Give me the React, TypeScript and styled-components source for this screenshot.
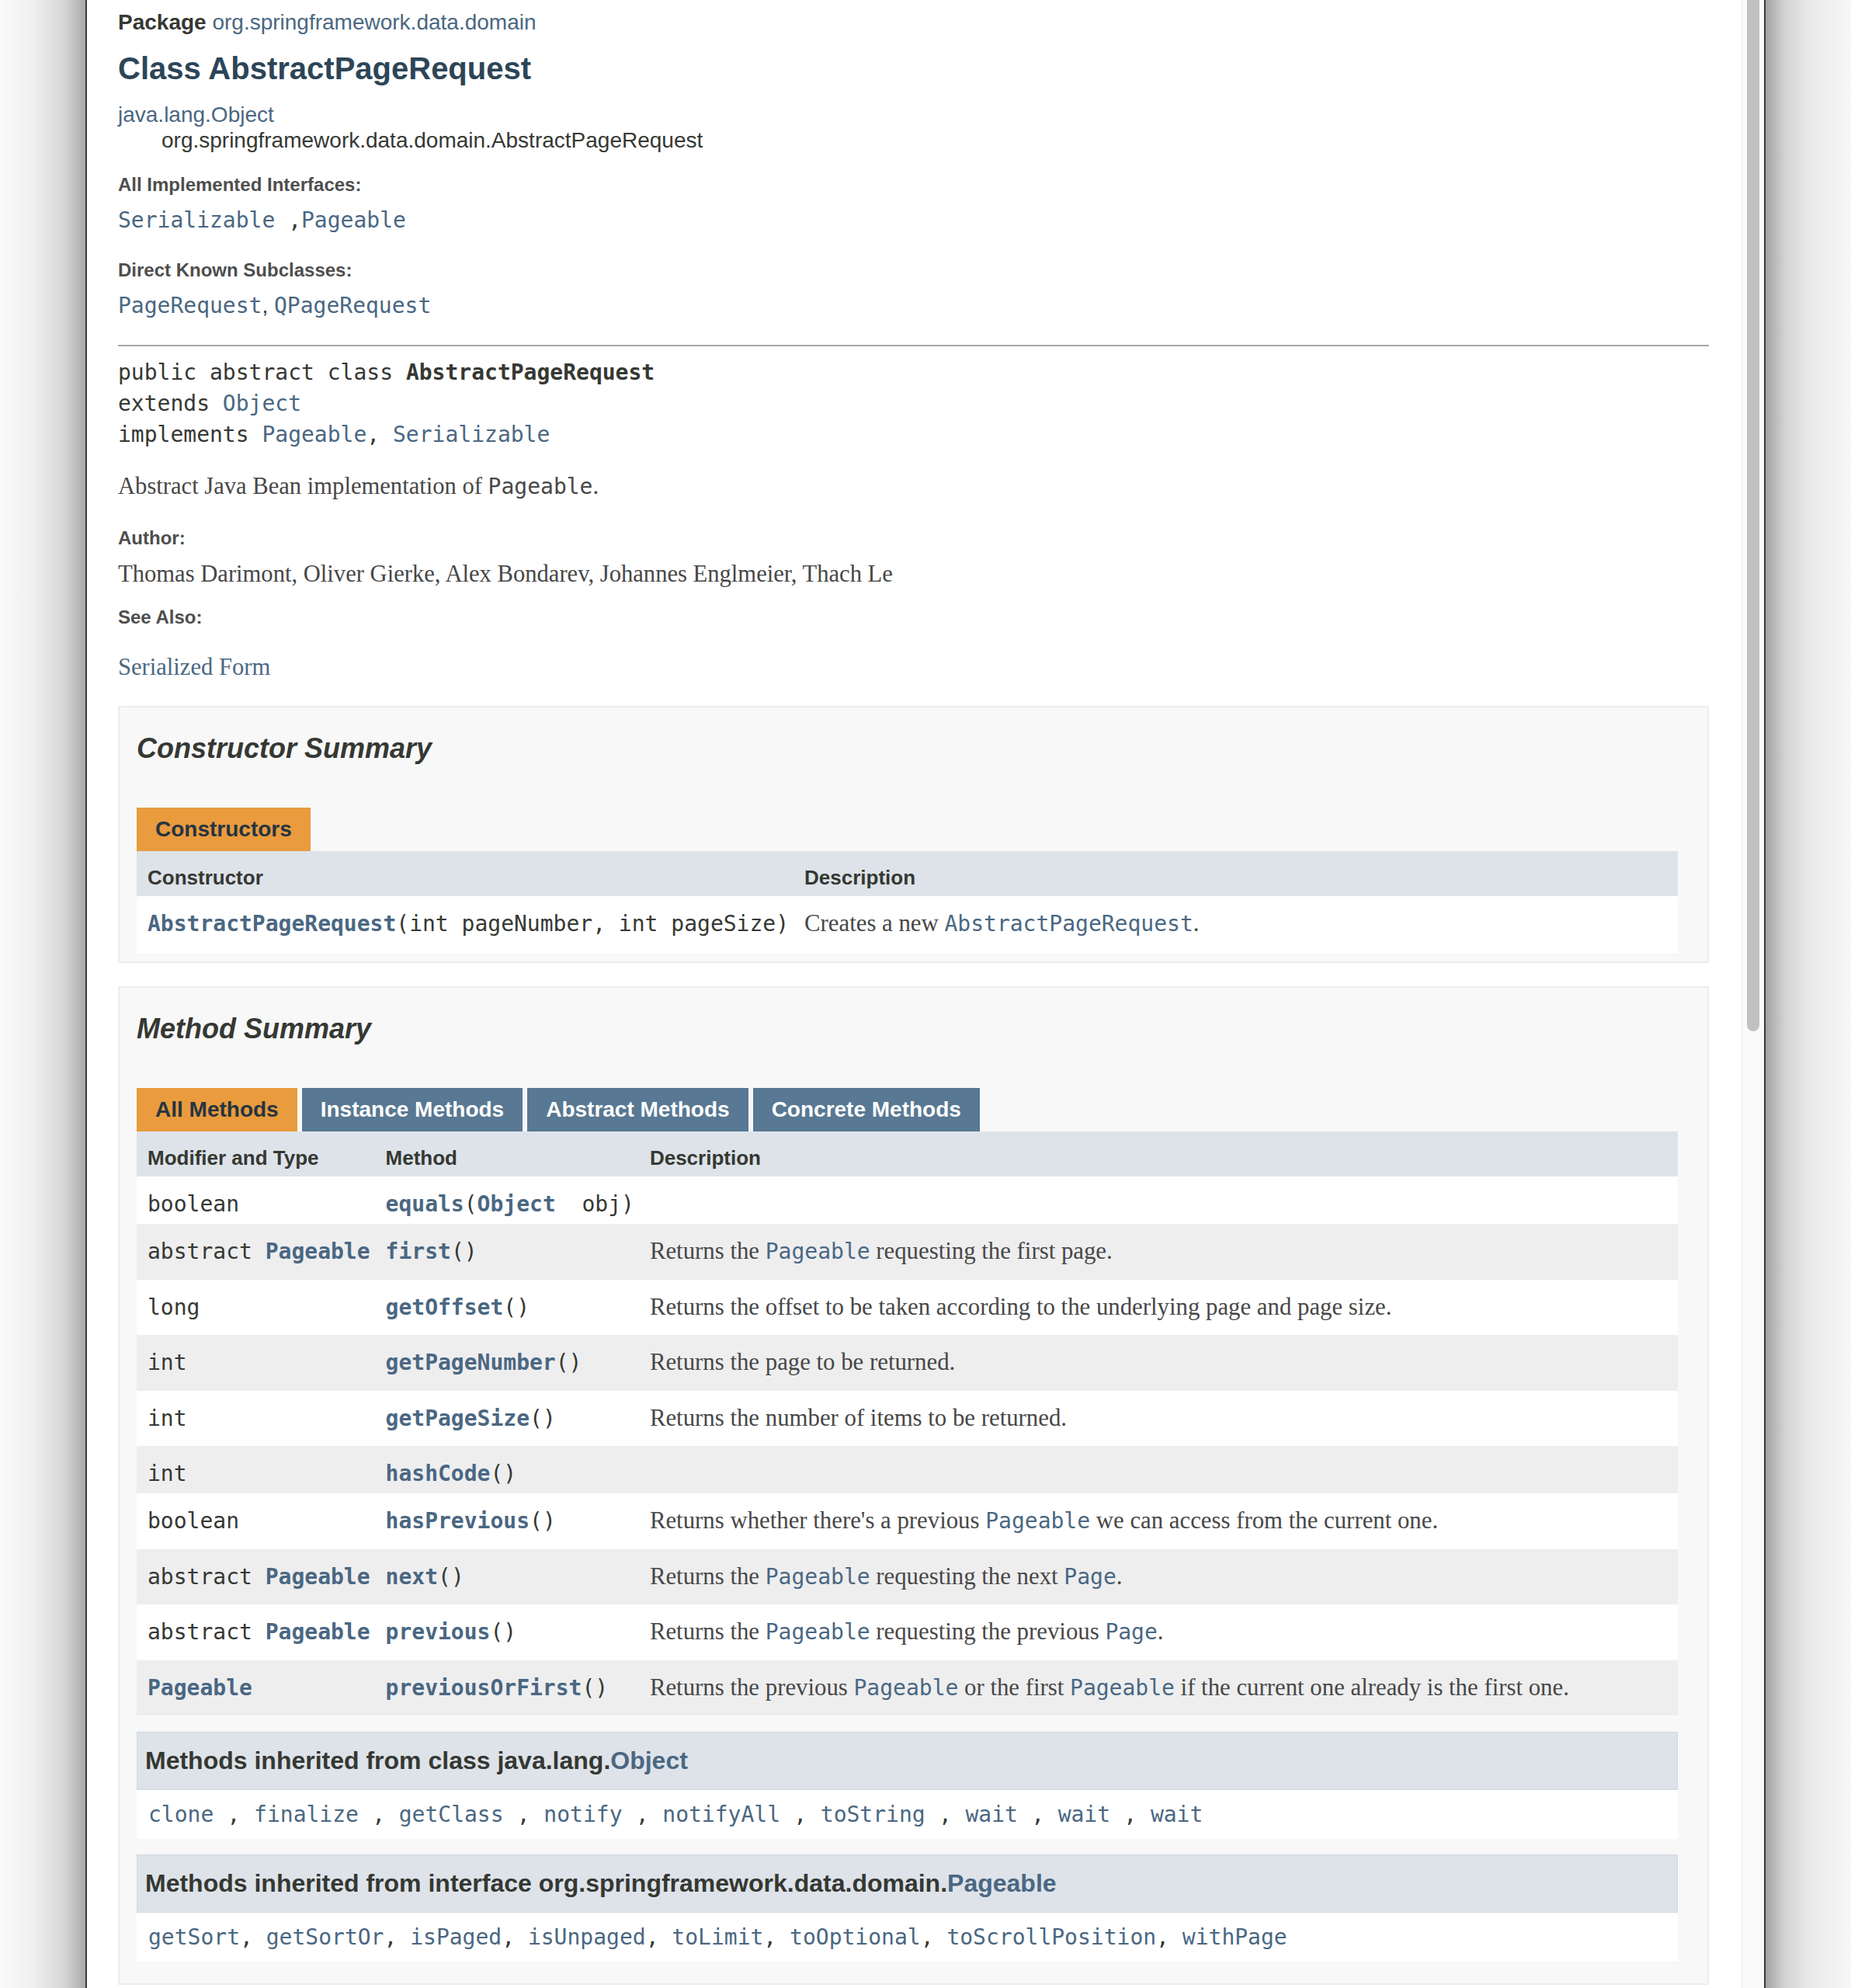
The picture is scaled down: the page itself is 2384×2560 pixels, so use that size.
import React from "react";
import styled, { createGlobalStyle } from "styled-components";

const sans = `"Liberation Sans", Arial, Helvetica, sans-serif`;
const mono = `"DejaVu Sans Mono", "Liberation Mono", monospace`;
const serif = `"Liberation Serif", "Times New Roman", serif`;

const LINK = "#4a6782";
const TEXT = "#353833";

const GlobalStyle = createGlobalStyle`
  html, body { margin: 0; padding: 0; background: #f4f4f4; }
  body { font-family: ${sans}; color: ${TEXT}; }
`;

const Desktop = styled.div`
  display: flex;
  width: 2384px;
  height: 2560px;
  overflow: hidden;
`;

const Shadow = styled.div<{ $side: "left" | "right" }>`
  flex: 0 0 110px;
  background: ${(p) =>
    p.$side === "left"
      ? "linear-gradient(to right, #fafafa 0%, #f1f1f1 35%, #d6d6d6 75%, #aaaaaa 100%)"
      : "linear-gradient(to right, #a2a2a2 0%, #d2d2d2 22%, #e9e9e9 50%, #f7f7f7 100%)"};
`;

const Window = styled.div`
  flex: 1;
  min-width: 0;
  display: flex;
  background: #ffffff;
  border-left: 2px solid #3a3a3a;
  border-right: 2px solid #3a3a3a;
`;

const Main = styled.main`
  flex: 1;
  min-width: 0;
  padding: 12px 42px 0 40px;
  overflow: hidden;
  font-size: 28px;
`;

const ScrollTrack = styled.div`
  flex: 0 0 29px;
  box-sizing: border-box;
  background: #fafafa;
  border-left: 1px solid #ebebeb;
  padding: 0 6px;
  overflow: hidden;
`;

const Thumb = styled.div`
  width: 16px;
  height: 1338px;
  margin-top: -10px;
  border-radius: 8px;
  background: #c1c1c1;
`;

const Link = styled.a`
  color: ${LINK};
  text-decoration: none;
`;

const Code = styled.code<{ $bold?: boolean; $link?: boolean }>`
  font-family: ${mono};
  font-size: 28px;
  font-weight: ${(p) => (p.$bold ? 700 : 400)};
  color: ${(p) => (p.$link ? LINK : "inherit")};
  white-space: pre;
`;

const SubTitle = styled.div`
  font-size: 28px;
  line-height: 33px;
  b { font-weight: 700; }
`;

const Title = styled.h1`
  margin: 20px 0;
  font-size: 40px;
  line-height: 46px;
  font-weight: 700;
  color: #2c4557;
`;

const Inheritance = styled.div`
  font-size: 28px;
  line-height: 33px;
`;

const InheritanceChild = styled.div`
  padding-left: 56px;
`;

const Notes = styled.dl<{ $gap: number }>`
  margin: ${(p) => p.$gap}px 0 0;
`;

const NoteTerm = styled.dt<{ $gap?: number }>`
  margin-top: ${(p) => p.$gap ?? 0}px;
  font-size: 24px;
  line-height: 28px;
  font-weight: 700;
  color: #4e4e4e;
`;

const NoteDef = styled.dd<{ $gap?: number; $serif?: boolean }>`
  margin: ${(p) => p.$gap ?? 12}px 0 0;
  line-height: 40px;
  font-family: ${(p) => (p.$serif ? serif : sans)};
  font-size: ${(p) => (p.$serif ? "30.6px" : "28px")};
  color: ${(p) => (p.$serif ? "#474747" : TEXT)};
`;

const Rule = styled.hr`
  margin: 30px 0 0;
  height: 0;
  border: none;
  border-top: 2px solid #a8a8a8;
`;

const Signature = styled.pre`
  margin: 14px 0 0;
  font-family: ${mono};
  font-size: 28px;
  line-height: 40px;
  color: ${TEXT};
`;

const Block = styled.div`
  margin-top: 26px;
  font-family: ${serif};
  font-size: 30.6px;
  line-height: 40px;
  color: #474747;
`;

const SummaryBox = styled.section<{ $top: number; $bottom: number }>`
  margin-top: ${(p) => p.$top}px;
  padding: 0 38px ${(p) => p.$bottom}px 22px;
  background: #f8f8f8;
  border: 2px solid #ededed;
`;

const SummaryHeading = styled.h2`
  margin: 32px 0 56px;
  font-size: 36px;
  line-height: 41px;
  font-style: italic;
  font-weight: 700;
  color: #353833;
`;

const Tabs = styled.div`
  display: flex;
  gap: 6px;
`;

const Tab = styled.button<{ $active?: boolean }>`
  border: none;
  margin: 0;
  padding: 12px 24px;
  font-family: ${sans};
  font-size: 28px;
  line-height: 32px;
  font-weight: 700;
  background: ${(p) => (p.$active ? "#e99b3e" : "#587893")};
  color: ${(p) => (p.$active ? "#253441" : "#ffffff")};
`;

const Grid = styled.div<{ $cols: string }>`
  display: grid;
  grid-template-columns: ${(p) => p.$cols};
`;

const HeaderCell = styled.div`
  padding: 16px 6px 6px 14px;
  background: #dee3e9;
  font-size: 26px;
  line-height: 36.4px;
  font-weight: 700;
  color: ${TEXT};
  white-space: nowrap;
`;

const Cell = styled.div<{ $alt: boolean }>`
  padding: 16px 6px 6px 14px;
  background: ${(p) => (p.$alt ? "#eeeeef" : "#ffffff")};
  font-family: ${mono};
  font-size: 28px;
  line-height: 39px;
  white-space: nowrap;
  color: ${TEXT};
`;

const DescBlock = styled.div<{ $tall?: boolean }>`
  margin-bottom: ${(p) => (p.$tall ? 12.5 : 10.5)}px;
  font-family: ${serif};
  font-size: 30.8px;
  line-height: 39px;
  color: #474747;
  white-space: nowrap;
`;

const InheritedGroup = styled.div<{ $gap: number }>`
  margin-top: ${(p) => p.$gap}px;
`;

const InheritedHeader = styled.h3`
  margin: 0;
  padding: 14px 10px;
  background: #dee3e9;
  border: 1px solid #d0d9e0;
  font-size: 32px;
  line-height: 44.8px;
  font-weight: 700;
  color: ${TEXT};
`;

const InheritedList = styled.div`
  padding: 12px 15px;
  background: #ffffff;
  font-family: ${mono};
  font-size: 28px;
  line-height: 39.2px;
  white-space: nowrap;
  color: ${TEXT};
`;

const Separator = styled.span<{ $wide?: boolean }>`
  letter-spacing: ${(p) => (p.$wide ? "0.4px" : "0")};
`;

const L = ({ children, bold }: { children: React.ReactNode; bold?: boolean }) => (
  <Code $link $bold={bold}>
    {children}
  </Code>
);

type Method = {
  type: React.ReactNode;
  name: string;
  params?: React.ReactNode;
  desc?: React.ReactNode;
};

const methods: Method[] = [
  {
    type: "boolean",
    name: "equals",
    params: (
      <>
        <L bold>Object</L>
        {"\u00a0 obj"}
      </>
    ),
  },
  {
    type: (
      <>
        abstract <L bold>Pageable</L>
      </>
    ),
    name: "first",
    desc: (
      <>
        Returns the <L>Pageable</L> requesting the first page.
      </>
    ),
  },
  {
    type: "long",
    name: "getOffset",
    desc: "Returns the offset to be taken according to the underlying page and page size.",
  },
  { type: "int", name: "getPageNumber", desc: "Returns the page to be returned." },
  { type: "int", name: "getPageSize", desc: "Returns the number of items to be returned." },
  { type: "int", name: "hashCode" },
  {
    type: "boolean",
    name: "hasPrevious",
    desc: (
      <>
        Returns whether there's a previous <L>Pageable</L> we can access from the current one.
      </>
    ),
  },
  {
    type: (
      <>
        abstract <L bold>Pageable</L>
      </>
    ),
    name: "next",
    desc: (
      <>
        Returns the <L>Pageable</L> requesting the next <L>Page</L>.
      </>
    ),
  },
  {
    type: (
      <>
        abstract <L bold>Pageable</L>
      </>
    ),
    name: "previous",
    desc: (
      <>
        Returns the <L>Pageable</L> requesting the previous <L>Page</L>.
      </>
    ),
  },
  {
    type: <L bold>Pageable</L>,
    name: "previousOrFirst",
    desc: (
      <>
        Returns the previous <L>Pageable</L> or the first <L>Pageable</L> if the current one already is the
        first one.
      </>
    ),
  },
];

const objectMethods = ["clone", "finalize", "getClass", "notify", "notifyAll", "toString", "wait", "wait", "wait"];
const pageableMethods = [
  "getSort",
  "getSortOr",
  "isPaged",
  "isUnpaged",
  "toLimit",
  "toOptional",
  "toScrollPosition",
  "withPage",
];

const joinLinks = (items: string[], sep: string, wide?: boolean) =>
  items.map((m, i) => (
    <React.Fragment key={i}>
      {i > 0 && <Separator $wide={wide}>{sep}</Separator>}
      <Link href="#">{m}</Link>
    </React.Fragment>
  ));

export default function App() {
  return (
    <>
      <GlobalStyle />
      <Desktop>
        <Shadow $side="left" />
        <Window>
          <Main>
            <SubTitle>
              <b>Package</b> <Link href="#">org.springframework.data.domain</Link>
            </SubTitle>
            <Title>Class AbstractPageRequest</Title>
            <Inheritance>
              <Link href="#">java.lang.Object</Link>
              <InheritanceChild>org.springframework.data.domain.AbstractPageRequest</InheritanceChild>
            </Inheritance>

            <Notes $gap={27}>
              <NoteTerm>All Implemented Interfaces:</NoteTerm>
              <NoteDef>
                <L>Serializable</L>
                <Code> ,</Code>
                <L>Pageable</L>
              </NoteDef>
              <NoteTerm $gap={30}>Direct Known Subclasses:</NoteTerm>
              <NoteDef>
                <L>PageRequest</L>, <L>QPageRequest</L>
              </NoteDef>
            </Notes>

            <Rule />

            <Signature>
              public abstract class <b>AbstractPageRequest</b>
              {"\n"}extends <Link href="#">Object</Link>
              {"\n"}implements <Link href="#">Pageable</Link>, <Link href="#">Serializable</Link>
            </Signature>

            <Block>
              Abstract Java Bean implementation of <Code>Pageable</Code>.
            </Block>

            <Notes $gap={32}>
              <NoteTerm>Author:</NoteTerm>
              <NoteDef $serif>Thomas Darimont, Oliver Gierke, Alex Bondarev, Johannes Englmeier, Thach Le</NoteDef>
              <NoteTerm $gap={22}>See Also:</NoteTerm>
              <NoteDef $serif $gap={30}>
                <Link href="#">Serialized Form</Link>
              </NoteDef>
            </Notes>

            <SummaryBox $top={30} $bottom={10}>
              <SummaryHeading>Constructor Summary</SummaryHeading>
              <Tabs>
                <Tab $active>Constructors</Tab>
              </Tabs>
              <Grid $cols="minmax(15%, max-content) minmax(15%, auto)">
                <HeaderCell>Constructor</HeaderCell>
                <HeaderCell>Description</HeaderCell>
                <Cell $alt={false}>
                  <L bold>AbstractPageRequest</L>(int pageNumber, int pageSize)
                </Cell>
                <Cell $alt={false}>
                  <DescBlock $tall>
                    Creates a new <L>AbstractPageRequest</L>.
                  </DescBlock>
                </Cell>
              </Grid>
            </SummaryBox>

            <SummaryBox $top={30} $bottom={28}>
              <SummaryHeading>Method Summary</SummaryHeading>
              <Tabs>
                <Tab $active>All Methods</Tab>
                <Tab>Instance Methods</Tab>
                <Tab>Abstract Methods</Tab>
                <Tab>Concrete Methods</Tab>
              </Tabs>
              <Grid $cols="minmax(15%, max-content) minmax(15%, max-content) minmax(15%, auto)">
                <HeaderCell>Modifier and Type</HeaderCell>
                <HeaderCell>Method</HeaderCell>
                <HeaderCell>Description</HeaderCell>
                {methods.map((m, i) => {
                  const alt = i % 2 === 1;
                  return (
                    <React.Fragment key={m.name}>
                      <Cell $alt={alt}>{m.type}</Cell>
                      <Cell $alt={alt}>
                        <L bold>{m.name}</L>({m.params})
                      </Cell>
                      <Cell $alt={alt}>{m.desc && <DescBlock>{m.desc}</DescBlock>}</Cell>
                    </React.Fragment>
                  );
                })}
              </Grid>

              <InheritedGroup $gap={21}>
                <InheritedHeader>
                  Methods inherited from class java.lang.<Link href="#">Object</Link>
                </InheritedHeader>
                <InheritedList>{joinLinks(objectMethods, " , ", true)}</InheritedList>
              </InheritedGroup>

              <InheritedGroup $gap={20}>
                <InheritedHeader>
                  Methods inherited from interface org.springframework.data.domain.<Link href="#">Pageable</Link>
                </InheritedHeader>
                <InheritedList>{joinLinks(pageableMethods, ", ")}</InheritedList>
              </InheritedGroup>
            </SummaryBox>
          </Main>
          <ScrollTrack>
            <Thumb />
          </ScrollTrack>
        </Window>
        <Shadow $side="right" />
      </Desktop>
    </>
  );
}
